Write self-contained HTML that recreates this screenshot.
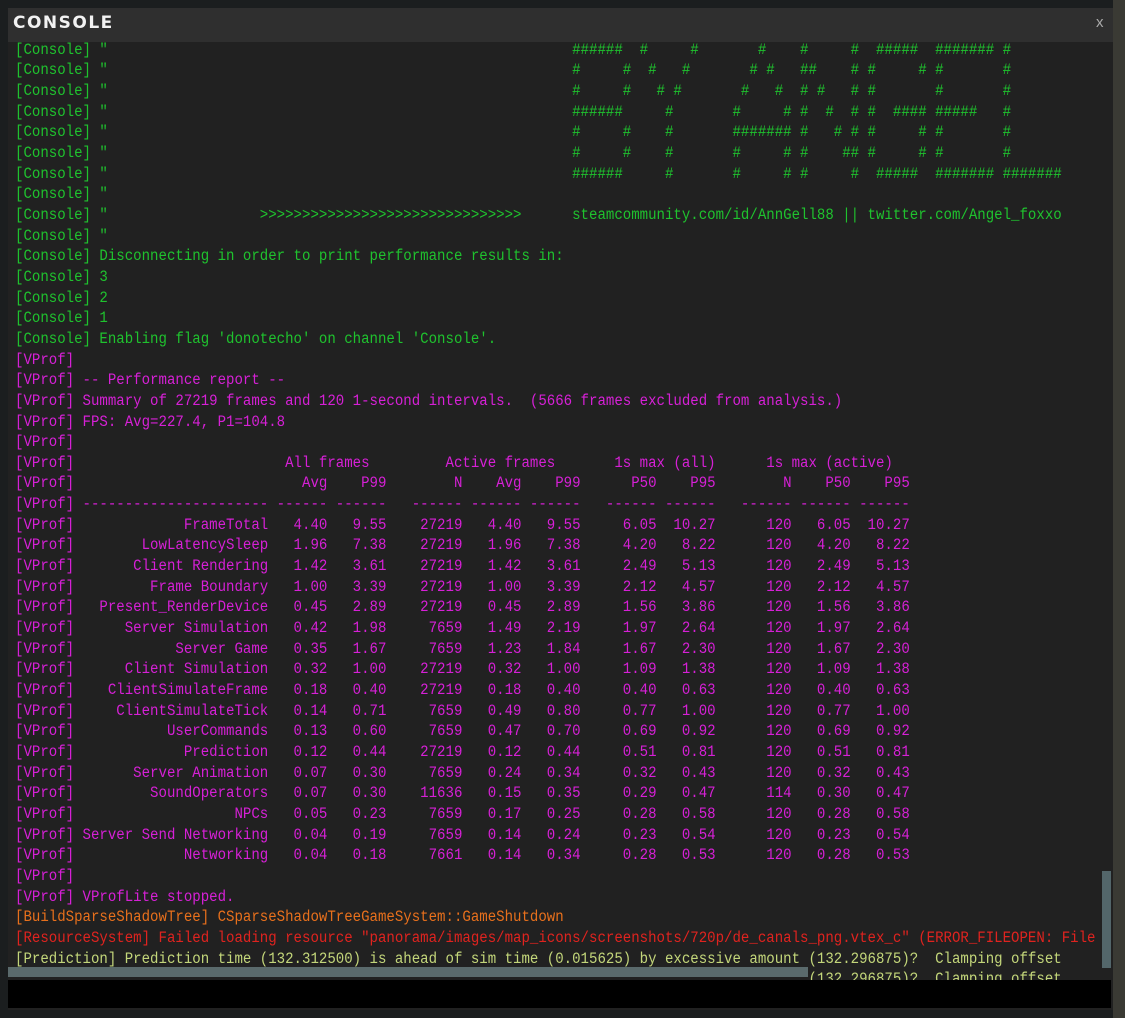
<!DOCTYPE html>
<html><head><meta charset="utf-8"><style>
html,body{margin:0;padding:0;width:1125px;height:1018px;overflow:hidden;background:#1b1e1f;}
#bgr{position:absolute;left:1113px;top:0;width:12px;height:1018px;background:#3a3a34;}
#win{position:absolute;left:8px;top:8px;width:1105px;height:1002px;background:#212121;}
#title{position:absolute;left:0;top:0;width:1105px;height:34px;background:#2f2f2f;}
#title .t{position:absolute;left:5px;top:5px;font:bold 17px "DejaVu Sans","Liberation Sans",sans-serif;color:#f2f2f2;letter-spacing:1.5px;}
#title .x{position:absolute;left:1088px;top:6px;font:15px "Liberation Sans",sans-serif;color:#aaa;}
#clip{position:absolute;left:0;top:34px;width:1092px;height:938px;overflow:hidden;}
pre{position:absolute;left:7px;top:-2.3px;margin:0;font-family:"Liberation Mono",monospace;font-size:15.5px;line-height:20.65px;transform:scaleX(0.9075);transform-origin:0 0;white-space:pre;}
.g{color:#1fc22e}.m{color:#d620d6}.o{color:#e8701c}.r{color:#e0231f}.y{color:#c3d67a}
#vs{position:absolute;left:1094px;top:863px;width:9px;height:97px;background:#53666a;}
#hst{position:absolute;left:0;top:959px;width:800px;height:10px;background:#5a6a6c;}
#inp{position:absolute;left:0;top:972px;width:1103px;height:28px;background:#000;}
</style></head><body>
<div id="bgr"></div>
<div id="win">
<div id="title"><span class="t">CONSOLE</span><span class="x">x</span></div>
<div id="clip"><pre><span class="g">[Console] "                                                       ######  #     #       #    #     #  #####  ####### #
[Console] "                                                       #     #  #   #       # #   ##    # #     # #       #
[Console] "                                                       #     #   # #       #   #  # #   # #       #       #
[Console] "                                                       ######     #       #     # #  #  # #  #### #####   #
[Console] "                                                       #     #    #       ####### #   # # #     # #       #
[Console] "                                                       #     #    #       #     # #    ## #     # #       #
[Console] "                                                       ######     #       #     # #     #  #####  ####### #######
[Console] "
[Console] "                  &gt;&gt;&gt;&gt;&gt;&gt;&gt;&gt;&gt;&gt;&gt;&gt;&gt;&gt;&gt;&gt;&gt;&gt;&gt;&gt;&gt;&gt;&gt;&gt;&gt;&gt;&gt;&gt;&gt;&gt;&gt;      steamcommunity.com/id/AnnGell88 || twitter.com/Angel_foxxo
[Console] "
[Console] Disconnecting in order to print performance results in:
[Console] 3
[Console] 2
[Console] 1
[Console] Enabling flag 'donotecho' on channel 'Console'.</span>
<span class="m">[VProf]
[VProf] -- Performance report --
[VProf] Summary of 27219 frames and 120 1-second intervals.  (5666 frames excluded from analysis.)
[VProf] FPS: Avg=227.4, P1=104.8
[VProf]
[VProf]                         All frames         Active frames       1s max (all)      1s max (active)
[VProf]                           Avg    P99        N    Avg    P99      P50    P95        N    P50    P95
[VProf] ---------------------- ------ ------   ------ ------ ------   ------ ------   ------ ------ ------
[VProf]             FrameTotal   4.40   9.55    27219   4.40   9.55     6.05  10.27      120   6.05  10.27
[VProf]        LowLatencySleep   1.96   7.38    27219   1.96   7.38     4.20   8.22      120   4.20   8.22
[VProf]       Client Rendering   1.42   3.61    27219   1.42   3.61     2.49   5.13      120   2.49   5.13
[VProf]         Frame Boundary   1.00   3.39    27219   1.00   3.39     2.12   4.57      120   2.12   4.57
[VProf]   Present_RenderDevice   0.45   2.89    27219   0.45   2.89     1.56   3.86      120   1.56   3.86
[VProf]      Server Simulation   0.42   1.98     7659   1.49   2.19     1.97   2.64      120   1.97   2.64
[VProf]            Server Game   0.35   1.67     7659   1.23   1.84     1.67   2.30      120   1.67   2.30
[VProf]      Client Simulation   0.32   1.00    27219   0.32   1.00     1.09   1.38      120   1.09   1.38
[VProf]    ClientSimulateFrame   0.18   0.40    27219   0.18   0.40     0.40   0.63      120   0.40   0.63
[VProf]     ClientSimulateTick   0.14   0.71     7659   0.49   0.80     0.77   1.00      120   0.77   1.00
[VProf]           UserCommands   0.13   0.60     7659   0.47   0.70     0.69   0.92      120   0.69   0.92
[VProf]             Prediction   0.12   0.44    27219   0.12   0.44     0.51   0.81      120   0.51   0.81
[VProf]       Server Animation   0.07   0.30     7659   0.24   0.34     0.32   0.43      120   0.32   0.43
[VProf]         SoundOperators   0.07   0.30    11636   0.15   0.35     0.29   0.47      114   0.30   0.47
[VProf]                   NPCs   0.05   0.23     7659   0.17   0.25     0.28   0.58      120   0.28   0.58
[VProf] Server Send Networking   0.04   0.19     7659   0.14   0.24     0.23   0.54      120   0.23   0.54
[VProf]             Networking   0.04   0.18     7661   0.14   0.34     0.28   0.53      120   0.28   0.53
[VProf]
[VProf] VProfLite stopped.</span>
<span class="o">[BuildSparseShadowTree] CSparseShadowTreeGameSystem::GameShutdown</span>
<span class="r">[ResourceSystem] Failed loading resource "panorama/images/map_icons/screenshots/720p/de_canals_png.vtex_c" (ERROR_FILEOPEN: File</span>
<span class="y">[Prediction] Prediction time (132.312500) is ahead of sim time (0.015625) by excessive amount (132.296875)?  Clamping offset
                                                                                              (132.296875)?  Clamping offset</span></pre></div>
<div id="vs"></div>
<div id="hst"></div>
<div id="inp"></div>
</div>
</body></html>
